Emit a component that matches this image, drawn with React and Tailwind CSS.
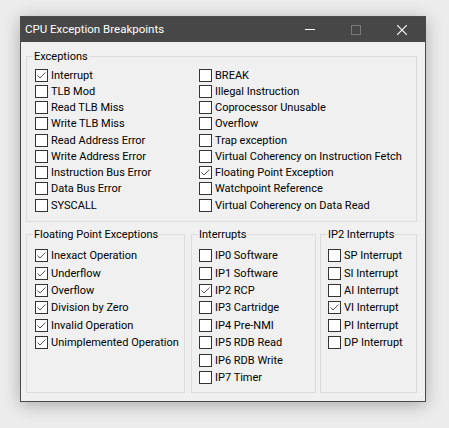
import React from "react";

const FONT = { fontFamily: 'Roboto, "Noto Sans", sans-serif' };

function Box({ checked }) {
  return (
    <span className="w-[13px] h-[13px] shrink-0 border border-[#333333] bg-white flex items-center justify-center">
      {checked && (
        <svg width="11" height="11" viewBox="0 0 11 11">
          <path d="M1.5 5.5 L4 8 L9.5 2.5" fill="none" stroke="#555" strokeWidth="1" />
        </svg>
      )}
    </span>
  );
}

function Item({ label, checked, h }) {
  return (
    <div className={`flex items-center gap-[3px] ${h}`}>
      <Box checked={checked} />
      <span className="text-[11px] leading-[15px] text-black whitespace-nowrap">{label}</span>
    </div>
  );
}

function Group({ title, className, children }) {
  return (
    <fieldset className={`border border-[#dcdcdc] p-0 m-0 min-w-0 ${className}`}>
      <legend className="ml-[6px] px-[1px] text-[11px] leading-[15px] text-black">{title}</legend>
      {children}
    </fieldset>
  );
}

const excLeft = [
  ["Interrupt", true],
  ["TLB Mod", false],
  ["Read TLB Miss", false],
  ["Write TLB Miss", false],
  ["Read Address Error", false],
  ["Write Address Error", false],
  ["Instruction Bus Error", false],
  ["Data Bus Error", false],
  ["SYSCALL", false],
];
const excRight = [
  ["BREAK", false],
  ["Illegal Instruction", false],
  ["Coprocessor Unusable", false],
  ["Overflow", false],
  ["Trap exception", false],
  ["Virtual Coherency on Instruction Fetch", false],
  ["Floating Point Exception", true],
  ["Watchpoint Reference", false],
  ["Virtual Coherency on Data Read", false],
];
const fp = [
  ["Inexact Operation", true],
  ["Underflow", true],
  ["Overflow", true],
  ["Division by Zero", true],
  ["Invalid Operation", true],
  ["Unimplemented Operation", true],
];
const ints = [
  ["IP0 Software", false],
  ["IP1 Software", false],
  ["IP2 RCP", true],
  ["IP3 Cartridge", false],
  ["IP4 Pre-NMI", false],
  ["IP5 RDB Read", false],
  ["IP6 RDB Write", false],
  ["IP7 Timer", false],
];
const ip2 = [
  ["SP Interrupt", false],
  ["SI Interrupt", false],
  ["AI Interrupt", false],
  ["VI Interrupt", true],
  ["PI Interrupt", false],
  ["DP Interrupt", false],
];

export default function App() {
  return (
    <div className="w-[449px] h-[428px] bg-[#ececec] pl-[20px] pt-[16px] overflow-hidden" style={FONT}>
      <div className="w-[406px] h-[386px] border border-[#4a4a4a] bg-[#f0f0f0] flex flex-col shadow-[0_3px_16px_rgba(0,0,0,0.28)]">
        <div className="h-[25px] bg-[#474747] flex items-center shrink-0">
          <span className="pl-[4px] text-[11.5px] leading-[15px] text-white flex-1">CPU Exception Breakpoints</span>
          <div className="w-[46px] h-full flex items-center justify-center">
            <span className="w-[10px] h-[1px] bg-white" />
          </div>
          <div className="w-[46px] h-full flex items-center justify-center">
            <span className="w-[10px] h-[10px] border border-[#7b7b7b]" />
          </div>
          <div className="w-[46px] h-full flex items-center justify-center">
            <svg width="10" height="10" viewBox="0 0 10 10">
              <path d="M0 0 L10 10 M10 0 L0 10" stroke="#fff" strokeWidth="1.1" />
            </svg>
          </div>
        </div>
        <div className="flex-1 flex flex-col pl-[5px]">
          <Group title="Exceptions" className="mt-[7px] w-[391px] h-[173px]">
            <div className="grid grid-cols-[164px_1fr] pl-[8px] pt-[3px]">
              <div className="flex flex-col">
                {excLeft.map(([l, c]) => (
                  <Item key={l} label={l} checked={c} h="h-[16.25px]" />
                ))}
              </div>
              <div className="flex flex-col">
                {excRight.map(([l, c]) => (
                  <Item key={l} label={l} checked={c} h="h-[16.25px]" />
                ))}
              </div>
            </div>
          </Group>
          <div className="flex mt-[5px]">
            <Group title="Floating Point Exceptions" className="w-[159px] h-[166px]">
              <div className="flex flex-col pl-[8px] pt-[5px]">
                {fp.map(([l, c]) => (
                  <Item key={l} label={l} checked={c} h="h-[17.4px]" />
                ))}
              </div>
            </Group>
            <Group title="Interrupts" className="ml-[6px] w-[125px] h-[166px]">
              <div className="flex flex-col pl-[7px] pt-[5px]">
                {ints.map(([l, c]) => (
                  <Item key={l} label={l} checked={c} h="h-[17.4px]" />
                ))}
              </div>
            </Group>
            <Group title="IP2 Interrupts" className="ml-[4px] w-[97px] h-[166px]">
              <div className="flex flex-col pl-[7px] pt-[5px]">
                {ip2.map(([l, c]) => (
                  <Item key={l} label={l} checked={c} h="h-[17.4px]" />
                ))}
              </div>
            </Group>
          </div>
        </div>
      </div>
    </div>
  );
}
